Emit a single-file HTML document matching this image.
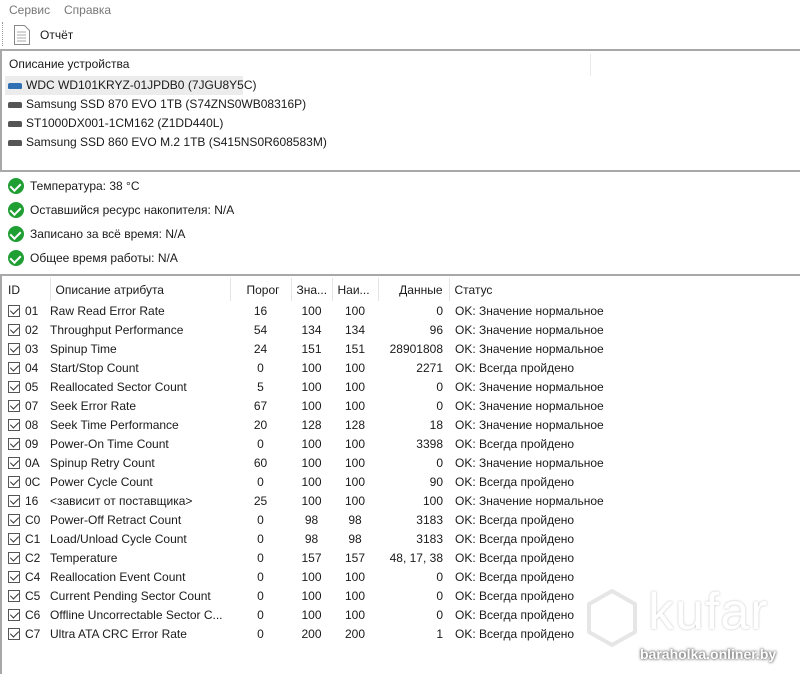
<!DOCTYPE html>
<html><head><meta charset="utf-8"><style>
*{margin:0;padding:0;box-sizing:border-box}
body{width:800px;height:674px;background:#fff;font-family:"Liberation Sans",sans-serif;font-size:12px;color:#1a1a1a;position:relative;overflow:hidden}
.a{position:absolute;white-space:nowrap}
.menu{top:3px;color:#777}
.hr{position:absolute;left:0;width:800px;height:2px;background:#a8a8a8}
.vb{position:absolute;width:2px;background:#a8a8a8}
.dev{left:8px;height:19px;line-height:19px;padding-left:18px}
.dev i{position:absolute;left:0;top:7px;width:14px;height:6px;border-radius:2px 2px 1px 1px;background:#555}
.st{left:8px;line-height:16px}
.st b{position:absolute;left:0;top:0;width:16px;height:16px;border-radius:50%;background:#1f9e33}
.st b:after{content:"";position:absolute;left:4px;top:3px;width:5px;height:8px;border:solid #fff;border-width:0 2px 2px 0;transform:rotate(45deg)}
.st span{margin-left:22px}
table{position:absolute;left:3px;top:278px;border-collapse:collapse}
td{height:19px;padding:0;white-space:nowrap}
th{height:23px;font-weight:normal;text-align:left;border-right:1px solid #e4e4e4;padding:0 0 0 5px}
.c{display:inline-block;width:12px;height:12px;border:1px solid #555;vertical-align:-2px;margin:0 5px 0 5px;position:relative}
.c:after{content:"";position:absolute;left:3px;top:0;width:4px;height:7px;border:solid #333;border-width:0 1px 1px 0;transform:rotate(45deg)}
.r{text-align:center}
.d{text-align:right;padding-right:6px}
.s{padding-left:6px}
</style></head><body>
<div class="a menu" style="left:9px">Сервис</div>
<div class="a menu" style="left:64px">Справка</div>
<div class="a" style="left:2px;top:22px;width:1px;height:24px;border-left:1px dotted #999"></div>
<svg class="a" style="left:13px;top:24px" width="18" height="22"><path d="M1.5 1.5h10l5 5v14h-15z" fill="#fff" stroke="#888"/><path d="M4 8h9M4 11h9M4 14h9M4 17h9" stroke="#aaa"/></svg>
<div class="a" style="left:40px;top:28px">Отчёт</div>
<div class="hr" style="top:49px"></div>
<div class="vb" style="left:0;top:49px;height:122px"></div>
<div class="a" style="left:9px;top:57px">Описание устройства</div>
<div class="a" style="left:590px;top:54px;width:1px;height:22px;background:#e8e8e8"></div>
<div class="a" style="left:5px;top:76px;width:238px;height:19px;background:#ececec"></div>
<div class="a dev" style="top:76px"><i style="background:#2f6fb4"></i>WDC WD101KRYZ-01JPDB0 (7JGU8Y5C)</div>
<div class="a dev" style="top:95px"><i></i>Samsung SSD 870 EVO 1TB (S74ZNS0WB08316P)</div>
<div class="a dev" style="top:114px"><i></i>ST1000DX001-1CM162 (Z1DD440L)</div>
<div class="a dev" style="top:133px"><i></i>Samsung SSD 860 EVO M.2 1TB (S415NS0R608583M)</div>
<div class="hr" style="top:170px"></div>
<div class="a st" style="top:178px"><b></b><span>Температура: 38 °C</span></div>
<div class="a st" style="top:202px"><b></b><span>Оставшийся ресурс накопителя: N/A</span></div>
<div class="a st" style="top:226px"><b></b><span>Записано за всё время: N/A</span></div>
<div class="a st" style="top:250px"><b></b><span>Общее время работы: N/A</span></div>
<div class="hr" style="top:274px"></div>
<div class="vb" style="left:0;top:274px;height:400px"></div>
<table>
<tr><th style="width:47px">ID</th><th style="width:180px">Описание атрибута</th><th style="width:61px;text-align:center">Порог</th><th style="width:41px">Зна...</th><th style="width:46px">Наи...</th><th style="width:71px;text-align:right;padding-right:6px">Данные</th><th style="width:200px;border:0">Статус</th></tr>
<tr><td><span class="c"></span>01</td><td>Raw Read Error Rate</td><td class="r">16</td><td class="r">100</td><td class="r">100</td><td class="d">0</td><td class="s">OK: Значение нормальное</td></tr>
<tr><td><span class="c"></span>02</td><td>Throughput Performance</td><td class="r">54</td><td class="r">134</td><td class="r">134</td><td class="d">96</td><td class="s">OK: Значение нормальное</td></tr>
<tr><td><span class="c"></span>03</td><td>Spinup Time</td><td class="r">24</td><td class="r">151</td><td class="r">151</td><td class="d">28901808</td><td class="s">OK: Значение нормальное</td></tr>
<tr><td><span class="c"></span>04</td><td>Start/Stop Count</td><td class="r">0</td><td class="r">100</td><td class="r">100</td><td class="d">2271</td><td class="s">OK: Всегда пройдено</td></tr>
<tr><td><span class="c"></span>05</td><td>Reallocated Sector Count</td><td class="r">5</td><td class="r">100</td><td class="r">100</td><td class="d">0</td><td class="s">OK: Значение нормальное</td></tr>
<tr><td><span class="c"></span>07</td><td>Seek Error Rate</td><td class="r">67</td><td class="r">100</td><td class="r">100</td><td class="d">0</td><td class="s">OK: Значение нормальное</td></tr>
<tr><td><span class="c"></span>08</td><td>Seek Time Performance</td><td class="r">20</td><td class="r">128</td><td class="r">128</td><td class="d">18</td><td class="s">OK: Значение нормальное</td></tr>
<tr><td><span class="c"></span>09</td><td>Power-On Time Count</td><td class="r">0</td><td class="r">100</td><td class="r">100</td><td class="d">3398</td><td class="s">OK: Всегда пройдено</td></tr>
<tr><td><span class="c"></span>0A</td><td>Spinup Retry Count</td><td class="r">60</td><td class="r">100</td><td class="r">100</td><td class="d">0</td><td class="s">OK: Значение нормальное</td></tr>
<tr><td><span class="c"></span>0C</td><td>Power Cycle Count</td><td class="r">0</td><td class="r">100</td><td class="r">100</td><td class="d">90</td><td class="s">OK: Всегда пройдено</td></tr>
<tr><td><span class="c"></span>16</td><td>&lt;зависит от поставщика&gt;</td><td class="r">25</td><td class="r">100</td><td class="r">100</td><td class="d">100</td><td class="s">OK: Значение нормальное</td></tr>
<tr><td><span class="c"></span>C0</td><td>Power-Off Retract Count</td><td class="r">0</td><td class="r">98</td><td class="r">98</td><td class="d">3183</td><td class="s">OK: Всегда пройдено</td></tr>
<tr><td><span class="c"></span>C1</td><td>Load/Unload Cycle Count</td><td class="r">0</td><td class="r">98</td><td class="r">98</td><td class="d">3183</td><td class="s">OK: Всегда пройдено</td></tr>
<tr><td><span class="c"></span>C2</td><td>Temperature</td><td class="r">0</td><td class="r">157</td><td class="r">157</td><td class="d">48, 17, 38</td><td class="s">OK: Всегда пройдено</td></tr>
<tr><td><span class="c"></span>C4</td><td>Reallocation Event Count</td><td class="r">0</td><td class="r">100</td><td class="r">100</td><td class="d">0</td><td class="s">OK: Всегда пройдено</td></tr>
<tr><td><span class="c"></span>C5</td><td>Current Pending Sector Count</td><td class="r">0</td><td class="r">100</td><td class="r">100</td><td class="d">0</td><td class="s">OK: Всегда пройдено</td></tr>
<tr><td><span class="c"></span>C6</td><td>Offline Uncorrectable Sector C...</td><td class="r">0</td><td class="r">100</td><td class="r">100</td><td class="d">0</td><td class="s">OK: Всегда пройдено</td></tr>
<tr><td><span class="c"></span>C7</td><td>Ultra ATA CRC Error Rate</td><td class="r">0</td><td class="r">200</td><td class="r">200</td><td class="d">1</td><td class="s">OK: Всегда пройдено</td></tr>
</table>
<svg class="a" style="left:582px;top:588px" width="60" height="60"><path d="M30 3 53 16v28L30 57 7 44V16z" fill="none" stroke="#e6e6e6" stroke-width="4" stroke-linejoin="round"/></svg>
<div class="a" style="left:648px;top:582px;font-size:52px;color:#fff;text-shadow:0 0 2px #bbb;letter-spacing:1px">kufar</div>
<div class="a" style="left:640px;top:646px;font-size:14px;font-weight:bold;color:#fff;text-shadow:0 0 3px #666,0 0 2px #666">baraholka.onliner.by</div>
</body></html>
